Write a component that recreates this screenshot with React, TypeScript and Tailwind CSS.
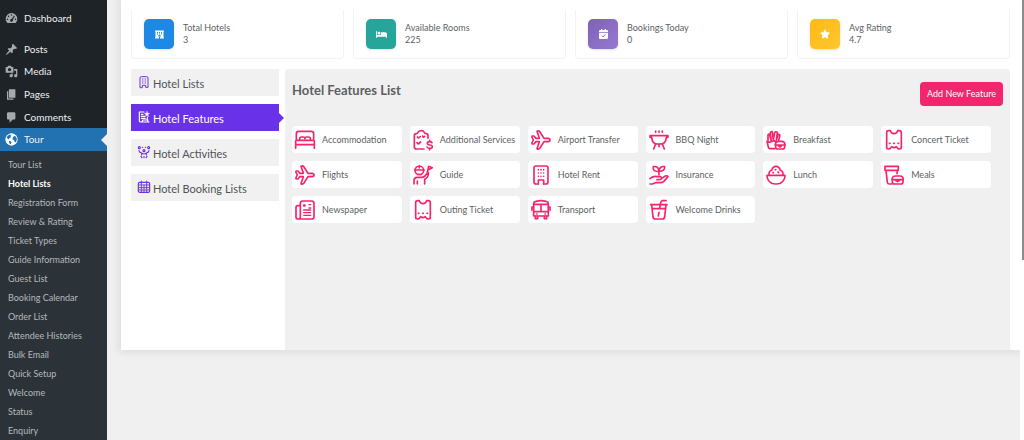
import React from 'react';
import { FaBed, FaHotel, FaStar } from 'react-icons/fa';
import clsx from 'clsx';

type IconProps = { children: React.ReactNode };

// Solid 20x20 glyphs of the admin menu
const MenuIcon: React.FC<IconProps> = ({ children }) => (
  <svg viewBox="0 0 20 20" className="size-[13px] shrink-0 fill-current" aria-hidden="true">
    {children}
  </svg>
);

// Outline icons of the feature cards, 60x60 grid
const FeatureIcon: React.FC<IconProps> = ({ children }) => (
  <svg
    viewBox="0 0 60 60"
    className="size-5 shrink-0 overflow-visible fill-none stroke-[#f4256d] stroke-5"
    strokeLinecap="round"
    strokeLinejoin="round"
    aria-hidden="true"
  >
    {children}
  </svg>
);

const TabIcon: React.FC<IconProps> = ({ children }) => (
  <svg
    viewBox="0 0 36 36"
    className="size-3 shrink-0 overflow-visible fill-none stroke-current stroke-[3.4]"
    strokeLinecap="round"
    strokeLinejoin="round"
    aria-hidden="true"
  >
    {children}
  </svg>
);

const planeIcon = (
  <path d="M57 30 Q57 25 51 25 H39 L27 6 Q23 1 18 4 L25 25 H15 L9 18 H4 Q2 18 3 22 L7 30 L3 38 Q2 42 4 42 H9 L15 35 H25 L18 56 Q23 59 27 54 L39 35 H51 Q57 35 57 30 Z" />
);

const ticketIcon = (
  <>
    <path d="M8 8 Q8 2 14 2 H19 Q21 11 30 11 Q39 11 41 2 H46 Q52 2 52 8 V52 Q52 57 47 57 L42 56 L37 50 Q33 53 30 53 Q27 53 23 50 L18 56 L13 57 Q8 57 8 52 Z" />
    <path d="M16 40 H18 M29 40 H31 M42 40 H44" />
  </>
);

const menu = [
  {
    label: 'Posts',
    icon: (
      <path d="M10.44 3.02l1.82-1.82 6.36 6.35-1.83 1.82c-1.05-.68-2.48-.57-3.41.36l-.75.75c-.92.93-1.04 2.35-.35 3.41l-1.83 1.82-2.41-2.41-2.8 2.79c-.42.42-3.38 2.71-3.8 2.29s1.86-3.39 2.28-3.81l2.79-2.79L4.1 9.36l1.83-1.82c1.05.69 2.48.57 3.4-.36l.75-.75c.93-.92 1.05-2.35.36-3.41z" />
    ),
  },
  {
    label: 'Media',
    icon: (
      <path
        fillRule="evenodd"
        d="M13 11V4c0-.55-.45-1-1-1h-1.67L9 1H5L3.67 3H2c-.55 0-1 .45-1 1v7c0 .55.45 1 1 1h10c.55 0 1-.45 1-1zM7 4.5c1.38 0 2.5 1.12 2.5 2.5S8.38 9.5 7 9.5 4.5 8.38 4.5 7 5.62 4.5 7 4.5zM14 6h5v10.5c0 1.38-1.12 2.5-2.5 2.5S14 17.88 14 16.5s1.12-2.5 2.5-2.5c.17 0 .34.02.5.05V9h-3V6zm-4 8.05V13h2v3.5c0 1.38-1.12 2.5-2.5 2.5S7 17.88 7 16.5 8.12 14 9.5 14c.17 0 .34.02.5.05z"
      />
    ),
  },
  { label: 'Pages', icon: <path d="M6 15V2h10v13H6zm-1 1h8v2H3V5h2v11z" /> },
  {
    label: 'Comments',
    icon: <path d="M5 2h9c1.1 0 2 .9 2 2v7c0 1.1-.9 2-2 2h-2l-5 5v-5H5c-1.1 0-2-.9-2-2V4c0-1.1.9-2 2-2z" />,
  },
];

const subMenu = [
  'Tour List',
  'Hotel Lists',
  'Registration Form',
  'Review & Rating',
  'Ticket Types',
  'Guide Information',
  'Guest List',
  'Booking Calendar',
  'Order List',
  'Attendee Histories',
  'Bulk Email',
  'Quick Setup',
  'Welcome',
  'Status',
  'Enquiry',
];

const stats = [
  { label: 'Total Hotels', value: '3', color: 'bg-[#1e88e5]', icon: <FaHotel size={9} /> },
  { label: 'Available Rooms', value: '225', color: 'bg-[#26a69a]', icon: <FaBed size={11} /> },
  {
    label: 'Bookings Today',
    value: '0',
    color: 'bg-linear-to-br from-[#7e62b5] to-[#9878d2]',
    icon: (
      <svg viewBox="0 0 27 30" className="h-[10px] w-[9px]" aria-hidden="true">
        <path d="M3 3 H6 V0 H10 V3 H17 V0 H21 V3 H24 Q27 3 27 6 V9 H0 V6 Q0 3 3 3 Z M0 11 H27 V27 Q27 30 24 30 H3 Q0 30 0 27 Z" fill="#fff" />
        <path d="M9 20 L12 24 L19 16" fill="none" stroke="#8b6cc2" strokeWidth="3" />
      </svg>
    ),
  },
  {
    label: 'Avg Rating',
    value: '4.7',
    color: 'bg-linear-to-br from-[#fdb913] to-[#ffc72e]',
    icon: <FaStar size={10} />,
  },
];

const tabs = [
  {
    label: 'Hotel Lists',
    icon: (
      <>
        <path d="M6 34 V6 Q6 2 10 2 H26 Q30 2 30 6 V34 H23 V28 H13 V34 Z" strokeWidth="3" />
        <path d="M13 9 H14 M18 9 H18 M22 9 H23 M13 15 H14 M18 15 H18 M22 15 H23 M13 21 H14 M18 21 H18 M22 21 H23" strokeWidth="2.6" />
      </>
    ),
  },
  {
    label: 'Hotel Features',
    active: true,
    icon: (
      <>
        <path d="M18 3 H4 V29 Q4 33 9 33 H33 Q28 32 28 27 V18 M9 33 Q14 33 14 27 H30" />
        <path d="M10 10 H15 M10 16 H20 M10 22 H22" />
        <path d="M27 1 L29 7 H35 L30 11 L32 17 L27 13 L22 17 L24 11 L19 7 H25 Z" fill="currentColor" strokeWidth="1" />
      </>
    ),
  },
  {
    label: 'Hotel Activities',
    icon: (
      <>
        <circle cx="4" cy="5" r="3" />
        <circle cx="32" cy="5" r="3" />
        <circle cx="18" cy="14" r="3" />
        <path d="M13 4 H14 M22 4 H23 M3 14 Q4 20 11 21 V27 M33 14 Q32 20 25 21 V27 M12 22 Q18 26 24 22 M9 31 L12 35 M27 31 L24 35 M18 32 V35" />
      </>
    ),
  },
  {
    label: 'Hotel Booking Lists',
    icon: (
      <>
        <rect x="1" y="4" width="34" height="30" rx="4" />
        <path d="M1 12 H35 M1 20 H35 M1 27 H35 M10 0 V34 M18 12 V34 M26 0 V34" strokeWidth="2.8" />
      </>
    ),
  },
];

const features = [
  {
    label: 'Accommodation',
    icon: (
      <>
        <path d="M4 30 V11 Q4 4 11 4 H49 Q56 4 56 11 V30 M2 55 V34 Q2 31 5 31 H55 Q58 31 58 34 V55 M2 44 H58" />
        <path d="M14 30 V26 Q14 21 19 21 H25 Q30 21 30 27 Q30 21 35 21 H41 Q46 21 46 26 V30" />
      </>
    ),
  },
  {
    label: 'Additional Services',
    icon: (
      <>
        <path d="M33 57 H10 Q4 57 4 51 V17 Q4 11 10 11 Q14 11 15 7 Q19 2 25 2 Q31 2 34 7 Q35 11 39 11 Q45 11 45 17 V25" />
        <path d="M13 21 L16 24 L22 20 M29 18 L31 22 L35 19 M12 38 L16 42 L23 36" />
        <path d="M57 38 Q55 35 50 35 Q43 35 43 40 Q43 44 50 45 Q58 46 58 50 Q58 55 50 55 Q44 55 42 51 M50 31 V35 M50 55 V59" />
      </>
    ),
  },
  { label: 'Airport Transfer', icon: planeIcon },
  {
    label: 'BBQ Night',
    icon: (
      <>
        <path d="M3 17 H57 V22 H52 Q50 42 36 42 H24 Q10 42 8 22 H3 Z" />
        <path d="M20 3 V7 M30 3 V7 M40 3 V7 M20 42 L14 57 M40 42 L46 57 M30 43 V50" />
      </>
    ),
  },
  {
    label: 'Breakfast',
    icon: (
      <>
        <path d="M26 56 H12 Q8 56 7 51 L3 34 Q11 39 18 34 Q25 31 29 35" />
        <path d="M6 33 V20 Q5 12 10 12 L16 33 L13 9 Q13 4 19 5 L22 30 L26 8 Q30 3 34 7 L31 31 L37 13 Q43 12 41 20 L38 31" />
        <path d="M28 45 Q28 34 38 34 H47 Q57 34 57 45 Z M27 45 H58 M29 46 V51 Q29 57 35 57 H50 Q56 57 56 51 V46 M36 46 L42 51 L48 46" />
      </>
    ),
  },
  { label: 'Concert Ticket', icon: ticketIcon },
  { label: 'Flights', icon: planeIcon },
  {
    label: 'Guide',
    icon: (
      <>
        <circle cx="19" cy="16" r="13" />
        <path d="M5 15 H33 M19 4 V8" />
        <path d="M3 57 V47 Q3 37 13 37 H27 Q37 36 43 23 L47 4 L58 8 L46 14 M46 23 Q47 38 35 43 V57 M13 48 V57" />
      </>
    ),
  },
  {
    label: 'Hotel Rent',
    icon: (
      <>
        <path d="M22 57 H15 Q9 57 9 51 V9 Q9 3 15 3 H45 Q51 3 51 9 V51 Q51 57 45 57 H38" />
        <path d="M22 14 H22 M30 14 H30 M38 14 H38 M22 24 H22 M30 24 H30 M38 24 H38 M22 34 H22 M30 34 H30 M38 34 H38 M22 57 V45 H38 V57" />
      </>
    ),
  },
  {
    label: 'Insurance',
    icon: (
      <>
        <path d="M30 30 V19 Q20 21 14 15 Q12 10 13 5 Q28 2 30 18 Q32 2 47 5 Q48 19 30 19" />
        <path d="M3 41 Q14 32 24 35 H34 Q38 36 37 41 Q36 44 31 44 H24 M37 41 L49 33 Q55 31 57 35 L44 50 Q40 53 34 53 H20 L10 57 H3" />
      </>
    ),
  },
  {
    label: 'Lunch',
    icon: (
      <>
        <path d="M3 31 H57 Q57 47 43 55 Q38 57 30 57 Q22 57 17 55 Q3 47 3 31 Z" />
        <path d="M9 30 Q8 19 17 16 Q20 4 30 4 Q40 4 43 16 Q52 19 51 30 M28 14 H29 M21 23 H22 M36 21 L38 23" />
      </>
    ),
  },
  {
    label: 'Meals',
    icon: (
      <>
        <path d="M3 4 H43 V16 H3 Z M6 16 L10 52 Q11 57 16 57 H24 M40 17 L39 26" />
        <path d="M24 44 Q24 33 35 33 H48 Q58 33 58 44 Z M25 45 V51 Q25 57 31 57 H51 Q57 57 57 51 V45 M34 45 L41 50 L48 45" />
      </>
    ),
  },
  {
    label: 'Newspaper',
    icon: (
      <>
        <path d="M16 50 V10 Q16 3 23 3 H50 Q57 3 57 10 V50 Q57 57 50 57 H10 Q3 57 3 50 V23 Q3 17 9 17 H15 M16 50 Q16 57 10 57" />
        <path d="M26 15 H30 V18 H26 Z M42 14 H47 M42 24 H47 M26 30 H47 M26 38 H47 M26 46 H47" strokeWidth="4" />
      </>
    ),
  },
  { label: 'Outing Ticket', icon: ticketIcon },
  {
    label: 'Transport',
    icon: (
      <>
        <path d="M8 12 Q8 5 15 4 Q30 0 45 4 Q52 5 52 12 V48 H8 Z M8 13 H52 M8 35 H52 M30 13 V35" />
        <path d="M8 21 H3 V31 M52 21 H57 V31 M17 42 H18 M42 42 H43 M13 49 V56 H20 V49 M40 49 V56 H47 V49" />
      </>
    ),
  },
  {
    label: 'Welcome Drinks',
    icon: (
      <>
        <path d="M5 14 H54 M8 14 L12 51 Q13 57 19 57 H40 Q46 57 47 51 L51 14 M9 26 H50" />
        <path d="M32 24 L35 8 Q36 3 40 2 H51 M30 37 L28 48" />
      </>
    ),
  },
];

const Sidebar: React.FC = () => (
  <nav className="flex w-[107px] shrink-0 flex-col bg-[#1d2327] pt-[7px] text-[10px] text-[#f0f0f1]">
    <a href="#dashboard" className="mb-2 flex h-[23px] items-center gap-[6px] pl-[5px]">
      <span className="text-[#a7aaad]">
        <MenuIcon>
          <path
            fillRule="evenodd"
            d="M3.76 17h12.48A8.9 8.9 0 0 0 19 10.6A9 9 0 0 0 1 10.6A8.9 8.9 0 0 0 3.76 17zM10 3.5a1.2 1.2 0 1 1 0 2.4a1.2 1.2 0 0 1 0-2.4zM5.5 5.5a1.2 1.2 0 1 1 0 2.4a1.2 1.2 0 0 1 0-2.4zM14 5.3l1.2 1-3.2 5.5a2.2 2.2 0 1 1-1.8-1.2zM3.8 10a1.2 1.2 0 1 1 0 2.4a1.2 1.2 0 0 1 0-2.4zM16.2 10a1.2 1.2 0 1 1 0 2.4a1.2 1.2 0 0 1 0-2.4z"
          />
        </MenuIcon>
      </span>
      Dashboard
    </a>
    {menu.map((item) => (
      <a key={item.label} href={`#${item.label}`} className="flex h-[23px] items-center gap-[6px] pl-[5px]">
        <span className="text-[#a7aaad]">
          <MenuIcon>{item.icon}</MenuIcon>
        </span>
        {item.label}
      </a>
    ))}
    <a href="#tour" className="relative flex h-[23px] items-center gap-[6px] bg-[#2271b1] pl-[5px]">
      <MenuIcon>
        <circle cx="10" cy="10" r="9.5" fill="#fff" />
        <path
          fill="#2271b1"
          d="M2.5 7 Q4 3.5 7 2.5 L10 2.5 L8.5 4.5 L9.5 6 L7 7.5 L6 10 L4 8.5 Z M12 7 L14 4.5 L16.5 5.5 L18.3 9 L17.5 13 L15.5 14.5 L14 11 L11.5 9.5 Z M6 12 L9 12.5 L10 15 L8.5 17.5 L6.5 15.5 Z"
        />
      </MenuIcon>
      Tour
      <span className="absolute right-0 top-1/2 -translate-y-1/2 border-y-[6px] border-r-[6px] border-y-transparent border-r-[#f0f0f1]" />
    </a>
    <ul className="flex-1 bg-[#2c3338] pt-1 text-[9px] text-[#b5b8bb]">
      {subMenu.map((label) => (
        <li key={label}>
          <a
            href={`#${label}`}
            className={clsx('flex h-[19px] items-center pl-2', label === 'Hotel Lists' && 'font-bold text-white')}
          >
            {label}
          </a>
        </li>
      ))}
    </ul>
  </nav>
);

export default function App() {
  return (
    <div className="flex h-screen overflow-hidden bg-[#f0f0f1] font-['Lato','Open_Sans',sans-serif] text-[#5c5f62]">
      <Sidebar />

      <main className="min-w-0 flex-1 pl-[14px]">
        <div className="bg-white px-[10px] pt-[10px] shadow-[0_0_8px_3px_rgba(0,0,0,0.07)]">
          {/* Stats */}
          <div className="grid grid-cols-4 gap-[9px]">
            {stats.map((stat) => (
              <div
                key={stat.label}
                className="flex items-center gap-[9px] rounded-b border border-t-0 border-[#f3f3f4] px-3 py-[9px]"
              >
                <div
                  className={clsx(
                    'flex size-[30px] shrink-0 items-center justify-center rounded-[5px] text-white shadow-sm',
                    stat.color
                  )}
                >
                  {stat.icon}
                </div>
                <div className="text-[9px] leading-3">
                  <p>{stat.label}</p>
                  <p>{stat.value}</p>
                </div>
              </div>
            ))}
          </div>

          <div className="mt-[10px] flex gap-[6px]">
            {/* Tabs */}
            <div className="flex w-[148px] shrink-0 flex-col gap-2">
              {tabs.map((tab) => (
                <button
                  key={tab.label}
                  type="button"
                  className={clsx(
                    'relative flex h-[27px] items-start gap-[3px] pl-[7px] pt-[7px] text-left text-[11px] leading-4',
                    tab.active ? 'bg-[#6a32e8] text-white' : 'bg-[#f1f1f1] text-[#505356]'
                  )}
                >
                  <span className={tab.active ? 'text-white' : 'text-[#6a32e8]'}>
                    <TabIcon>{tab.icon}</TabIcon>
                  </span>
                  {tab.label}
                  {tab.active && (
                    <span className="absolute left-full top-1/2 -translate-y-1/2 border-y-[5px] border-l-[5px] border-y-transparent border-l-[#6a32e8]" />
                  )}
                </button>
              ))}
            </div>

            {/* Features */}
            <section className="min-h-[281px] flex-1 rounded-t bg-[#f0f0f0] px-[7px] pt-[13px]">
              <div className="flex items-start justify-between">
                <h2 className="text-[13px] font-bold leading-4">Hotel Features List</h2>
                <button type="button" className="h-6 rounded bg-[#f4256d] px-[7px] text-[9px] text-white">
                  Add New Feature
                </button>
              </div>
              <div className="mr-3 mt-5 grid grid-cols-6 gap-2">
                {features.map((feature) => (
                  <div
                    key={feature.label}
                    className="flex h-[27px] items-center gap-[7px] whitespace-nowrap rounded bg-white pl-[3px] text-[9px]"
                  >
                    <FeatureIcon>{feature.icon}</FeatureIcon>
                    {feature.label}
                  </div>
                ))}
              </div>
            </section>
          </div>
        </div>
      </main>

      <div className="flex w-1 shrink-0 justify-end bg-white">
        <div className="h-[260px] w-[2px] bg-[#8b8b8b]" />
      </div>
    </div>
  );
}
